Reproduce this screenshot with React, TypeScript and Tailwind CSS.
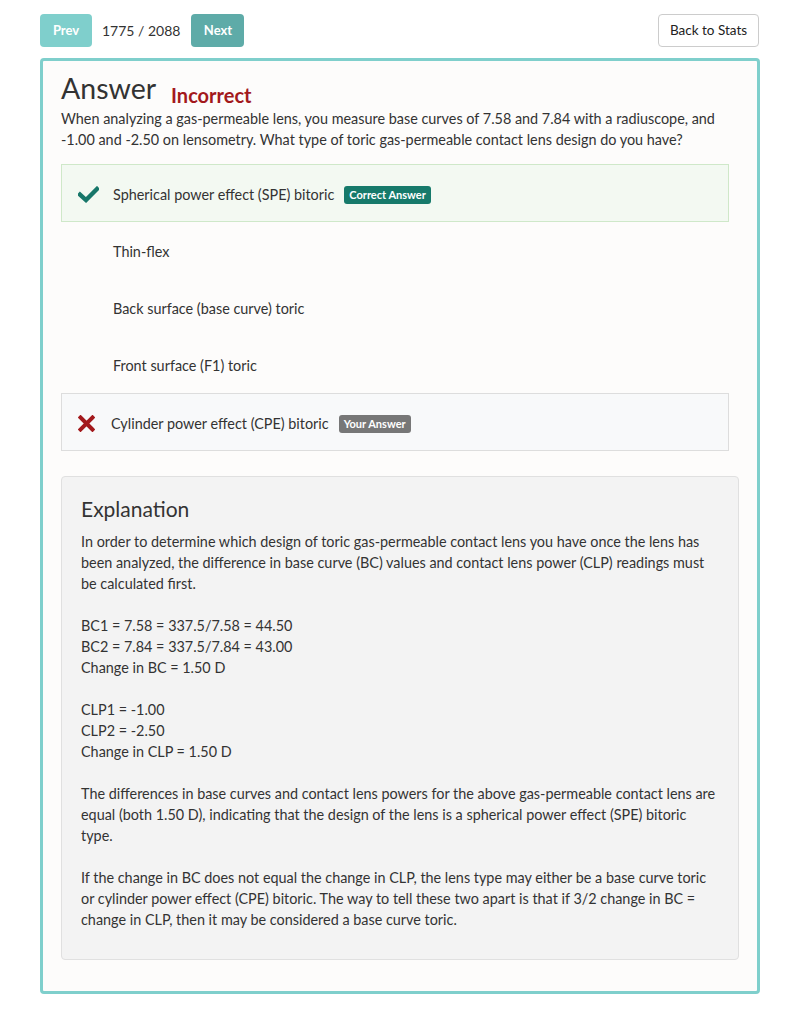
import React from "react";

const font = { fontFamily: "Lato, 'Open Sans', sans-serif" };

function Check() {
  return (
    <svg width="21" height="17" viewBox="0 0 21 17" className="shrink-0">
      <path d="M2 8.5 L8 14 L19 3" fill="none" stroke="#17776a" strokeWidth="4.4" strokeLinecap="square" />
    </svg>
  );
}

function Cross() {
  return (
    <svg width="17" height="17" viewBox="0 0 17 17" className="shrink-0">
      <path d="M2.5 2.5 L14.5 14.5 M14.5 2.5 L2.5 14.5" fill="none" stroke="#a3191c" strokeWidth="4" strokeLinecap="square" />
    </svg>
  );
}

export default function App() {
  return (
    <div className="min-h-[1017px] bg-white text-[#333] text-[14.4px]" style={font}>
      <div className="w-[720px] ml-[40px] pt-[14px]">
        <div className="flex items-center justify-between h-[33px]">
          <div className="flex items-center">
            <button className="h-[33px] w-[52px] rounded-[4px] bg-[#7fcfcc] text-white font-bold text-[13px]">Prev</button>
            <span className="ml-[10px] mr-[11px] text-[14px] text-[#333]">1775 / 2088</span>
            <button className="h-[33px] w-[53px] rounded-[4px] bg-[#5eaba8] text-white font-bold text-[13px]">Next</button>
          </div>
          <button className="h-[33px] w-[101px] mr-[1px] rounded-[4px] border border-[#cccccc] bg-white text-[13.5px] text-[#222]">Back to Stats</button>
        </div>

        <div className="mt-[11px] border-[3px] border-[#7fcfcc] rounded-[4px] bg-[#fdfcfb] px-[18px] pt-[8px] pb-[31px]">
          <div className="flex items-baseline h-[39px]">
            <h1 className="text-[28.5px] leading-[39px] text-[#333]">Answer</h1>
            <span className="ml-[15px] text-[20px] font-bold text-[#a3191c] relative top-[4px]">Incorrect</span>
          </div>
          <p className="leading-[21px] mt-[0px] mb-[14px] whitespace-nowrap">
            When analyzing a gas-permeable lens, you measure base curves of 7.58 and 7.84 with a radiuscope, and<br />
            -1.00 and -2.50 on lensometry. What type of toric gas-permeable contact lens design do you have?
          </p>

          <div className="w-[668px]">
            <div className="h-[58px] flex items-center border border-[#cfe8c9] bg-[#f3f9f2] pl-[16px] pt-[3px]">
              <Check />
              <span className="ml-[14px]">Spherical power effect (SPE) bitoric</span>
              <span className="ml-[10px] h-[18px] px-[5px] rounded-[3px] bg-[#167a6b] text-white font-bold text-[11px] leading-[18px]">Correct Answer</span>
            </div>
            <div className="h-[57px] flex items-center pl-[52px] pt-[3px]">Thin-flex</div>
            <div className="h-[57px] flex items-center pl-[52px] pt-[3px]">Back surface (base curve) toric</div>
            <div className="h-[57px] flex items-center pl-[52px] pt-[3px]">Front surface (F1) toric</div>
            <div className="h-[58px] flex items-center border border-[#dddddd] bg-[#f8f9fa] pl-[16px] pt-[3px]">
              <Cross />
              <span className="ml-[16px]">Cylinder power effect (CPE) bitoric</span>
              <span className="ml-[10px] h-[18px] px-[5px] rounded-[3px] bg-[#777777] text-white font-bold text-[11px] leading-[18px]">Your Answer</span>
            </div>
          </div>

          <div className="mt-[25px] border border-[#e0e0e0] rounded-[4px] bg-[#f3f3f3] px-[19px] pt-[19px] pb-[29px] leading-[21px] whitespace-nowrap">
            <h2 className="text-[21px] leading-[26px] text-[#333] mb-[9px]">Explanation</h2>
            <p>
              In order to determine which design of toric gas-permeable contact lens you have once the lens has<br />
              been analyzed, the difference in base curve (BC) values and contact lens power (CLP) readings must<br />
              be calculated first.
            </p>
            <p className="mt-[21px]">
              BC1 = 7.58 = 337.5/7.58 = 44.50<br />
              BC2 = 7.84 = 337.5/7.84 = 43.00<br />
              Change in BC = 1.50 D
            </p>
            <p className="mt-[21px]">
              CLP1 = -1.00<br />
              CLP2 = -2.50<br />
              Change in CLP = 1.50 D
            </p>
            <p className="mt-[21px]">
              The differences in base curves and contact lens powers for the above gas-permeable contact lens are<br />
              equal (both 1.50 D), indicating that the design of the lens is a spherical power effect (SPE) bitoric<br />
              type.
            </p>
            <p className="mt-[21px]">
              If the change in BC does not equal the change in CLP, the lens type may either be a base curve toric<br />
              or cylinder power effect (CPE) bitoric. The way to tell these two apart is that if 3/2 change in BC =<br />
              change in CLP, then it may be considered a base curve toric.
            </p>
          </div>
        </div>
      </div>
    </div>
  );
}
